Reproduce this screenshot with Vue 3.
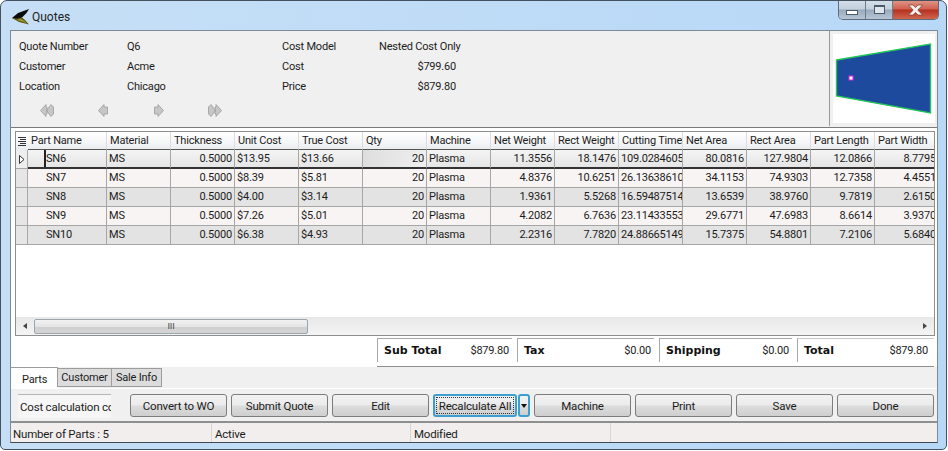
<script setup>
const columns = [
  { label: 'Part Name', width: 79, key: 'name' },
  { label: 'Material', width: 64, key: 'mat' },
  { label: 'Thickness', width: 64, key: 'thick', right: true },
  { label: 'Unit Cost', width: 64, key: 'unit' },
  { label: 'True Cost', width: 64, key: 'truec' },
  { label: 'Qty', width: 64, key: 'qty', right: true, shade: true },
  { label: 'Machine', width: 64, key: 'mach' },
  { label: 'Net Weight', width: 64, key: 'net', right: true },
  { label: 'Rect Weight', width: 64, key: 'rect', right: true },
  { label: 'Cutting Time', width: 64, key: 'cut' },
  { label: 'Net Area', width: 64, key: 'area', right: true },
  { label: 'Rect Area', width: 64, key: 'rarea', right: true },
  { label: 'Part Length', width: 64, key: 'len', right: true },
  { label: 'Part Width', width: 64, key: 'wid', right: true }
]
const rows = [
  { name: 'SN6', mat: 'MS', thick: '0.5000', unit: '$13.95', truec: '$13.66', qty: '20', mach: 'Plasma', net: '11.3556', rect: '18.1476', cut: '109.02846051', area: '80.0816', rarea: '127.9804', len: '12.0866', wid: '8.7795' },
  { name: 'SN7', mat: 'MS', thick: '0.5000', unit: '$8.39', truec: '$5.81', qty: '20', mach: 'Plasma', net: '4.8376', rect: '10.6251', cut: '26.13638610', area: '34.1153', rarea: '74.9303', len: '12.7358', wid: '4.4551' },
  { name: 'SN8', mat: 'MS', thick: '0.5000', unit: '$4.00', truec: '$3.14', qty: '20', mach: 'Plasma', net: '1.9361', rect: '5.5268', cut: '16.59487514', area: '13.6539', rarea: '38.9760', len: '9.7819', wid: '2.6150' },
  { name: 'SN9', mat: 'MS', thick: '0.5000', unit: '$7.26', truec: '$5.01', qty: '20', mach: 'Plasma', net: '4.2082', rect: '6.7636', cut: '23.11433553', area: '29.6771', rarea: '47.6983', len: '8.6614', wid: '3.9370' },
  { name: 'SN10', mat: 'MS', thick: '0.5000', unit: '$6.38', truec: '$4.93', qty: '20', mach: 'Plasma', net: '2.2316', rect: '7.7820', cut: '24.88665149', area: '15.7375', rarea: '54.8801', len: '7.2106', wid: '5.6840' }
]
const totals = [
  { label: 'Sub Total', value: '$879.80', width: 140 },
  { label: 'Tax', value: '$0.00', width: 142 },
  { label: 'Shipping', value: '$0.00', width: 138 },
  { label: 'Total', value: '$879.80', width: 137 }
]
const actionsA = ['Convert to WO', 'Submit Quote', 'Edit']
const actionsB = ['Machine', 'Print', 'Save', 'Done']
</script>

<template>
  <div class="window">
    <header class="titlebar">
      <svg class="logo" width="17" height="16" viewBox="0 0 17 16">
        <path d="M17 0 L6 4 L0 9 L5 11 L10 8.5 L14.5 4 Z" fill="#0c0c0c" />
        <path d="M0 9 L7 13 L17 15.5 L13 11 L10 8.5 L5 9.5 Z" fill="#5f5c14" />
        <path d="M5 11 L11 12.5 L15 14.5 L11 11 L8 10 Z" fill="#a3a038" />
      </svg>
      <span class="title">Quotes</span>
      <div class="controls">
        <span class="ctl ctl-min"><i class="min-glyph"></i></span>
        <span class="ctl ctl-max"><i class="max-glyph"></i></span>
        <span class="ctl ctl-close">
          <svg width="17" height="12" viewBox="0 0 17 12"><path d="M1.5 1 H6 L8.5 3.6 L11 1 H15.5 L10.8 6 L15.5 11 H11 L8.5 8.4 L6 11 H1.5 L6.2 6 Z" fill="#f4f0ee" stroke="#7a3a30" stroke-width="0.7"/></svg>
        </span>
      </div>
    </header>

    <main class="client">
      <section class="summary">
        <div class="info">
          <div class="info-grid">
            <span>Quote Number</span><span>Q6</span><span>Cost Model</span><span>Nested Cost Only</span>
            <span>Customer</span><span>Acme</span><span>Cost</span><span class="money">$799.60</span>
            <span>Location</span><span>Chicago</span><span>Price</span><span class="money">$879.80</span>
          </div>
          <div class="nav">
            <svg width="14" height="13" viewBox="0 0 14 13"><path d="M6 .5 V3 H7 V10 H6 V12.5 L.5 6.5 Z M11 .5 L13.5 3 V10 L11 12.5 L6.5 6.5 Z" fill="#c6c6c6" stroke="#9c9c9c" stroke-width="0.8"/></svg>
            <svg width="10" height="13" viewBox="0 0 10 13"><path d="M6 .5 L.5 6.5 L6 12.5 V10 H9.5 V3 H6 Z" fill="#c6c6c6" stroke="#9c9c9c" stroke-width="0.8"/></svg>
            <svg width="10" height="13" viewBox="0 0 10 13"><path d="M4 .5 L9.5 6.5 L4 12.5 V10 H.5 V3 H4 Z" fill="#c6c6c6" stroke="#9c9c9c" stroke-width="0.8"/></svg>
            <svg width="14" height="13" viewBox="0 0 14 13"><path d="M3 .5 L7.5 6.5 L3 12.5 L.5 10 V3 Z M8 .5 L13.5 6.5 L8 12.5 V10 H7 V3 H8 Z" fill="#c6c6c6" stroke="#9c9c9c" stroke-width="0.8"/></svg>
          </div>
        </div>
        <div class="preview">
          <svg width="102" height="89" viewBox="0 0 102 89">
            <path d="M3.5 26 L97.5 10 L97.5 79 L3.5 62 Z" fill="#1e4a9e" stroke="#22c55a" stroke-width="1.4" />
            <rect x="16" y="42" width="4" height="4" fill="#fff" stroke="#e020e0" stroke-width="1" />
          </svg>
        </div>
      </section>

      <section class="parts">
        <div class="grid">
          <div class="grid-view">
            <div class="row head">
              <div class="rowhead corner">
                <svg width="8" height="9" viewBox="0 0 8 9"><path d="M0 .5H8M2 2.5H8M0 4.5H8M2 6.5H8M0 8.5H8" stroke="#333" stroke-width="1"/></svg>
              </div>
              <div v-for="c in columns" :key="c.key" class="cell hcell" :style="{ width: c.width + 'px' }"><span>{{ c.label }}</span></div>
            </div>
            <div v-for="(r, i) in rows" :key="r.name" class="row" :class="[i === 0 ? 'selected' : i % 2 ? 'light' : 'dark']">
              <div class="rowhead">
                <svg v-if="i === 0" width="6" height="9" viewBox="0 0 6 9"><path d="M.5 .5 L5 4.5 L.5 8.5 Z" fill="#fff" stroke="#333"/></svg>
              </div>
              <div
                v-for="c in columns"
                :key="c.key"
                class="cell"
                :class="{ right: c.right, shade: c.shade, first: c.key === 'name', focus: i === 0 && c.key === 'name' }"
                :style="{ width: c.width + 'px' }"
              ><span class="clip">{{ r[c.key] }}</span></div>
            </div>
          </div>
          <div class="scrollbar">
            <span class="arrow arrow-l"></span>
            <span class="thumb"><i>III</i></span>
            <span class="arrow arrow-r"></span>
          </div>
        </div>

        <div class="totals">
          <div v-for="t in totals" :key="t.label" class="total" :style="{ width: t.width + 'px' }">
            <div class="total-box">
              <b>{{ t.label }}</b><span>{{ t.value }}</span>
            </div>
          </div>
        </div>
      </section>

      <nav class="tabs">
        <span class="tab active">Parts</span>
        <span class="tab tab-customer">Customer</span>
        <span class="tab tab-sale">Sale Info</span>
      </nav>

      <section class="actions">
        <div class="note">Cost calculation co</div>
        <div class="buttons">
          <button v-for="a in actionsA" :key="a" class="btn">{{ a }}</button>
          <div class="split">
            <button class="btn btn-main"><span class="dots">Recalculate All</span></button>
            <button class="btn btn-drop"><i></i></button>
          </div>
          <button v-for="a in actionsB" :key="a" class="btn">{{ a }}</button>
        </div>
      </section>

      <footer class="status">
        <span style="width: 200px">Number of Parts : 5</span>
        <span style="width: 199px">Active</span>
        <span style="width: 200px">Modified</span>
        <span class="grip"></span>
      </footer>
    </main>
  </div>
</template>

<style scoped>
* { box-sizing: border-box; }
.window {
  width: 947px;
  height: 450px;
  padding: 0 8px 6px 9px;
  display: flex;
  flex-direction: column;
  border: 1px solid #44515e;
  border-radius: 7px 7px 5px 5px;
  background: linear-gradient(90deg, #c6dff6 0%, #b7d8f7 100%);
  font-family: Roboto, "Liberation Sans", Arial, sans-serif;
  font-size: 11px;
  letter-spacing: -0.2px;
  color: #1c1c1c;
  overflow: hidden;
}
.titlebar {
  height: 29px;
  flex: none;
  display: flex;
  align-items: center;
  position: relative;
  padding: 2px 0 0 2px;
}
.logo { margin-right: 3px; }
.title { font-size: 12px; letter-spacing: 0; color: #222; }
.controls {
  position: absolute;
  right: -1px;
  top: -1px;
  height: 20px;
  display: flex;
  border: 1px solid #5d6b7a;
  border-top: 0;
  border-radius: 0 0 5px 5px;
  overflow: hidden;
}
.ctl {
  display: flex;
  align-items: center;
  justify-content: center;
  background: linear-gradient(180deg, #d5e0ea 0%, #c3d0dd 48%, #98a9ba 52%, #b6c6d6 100%);
  border-right: 1px solid #6d7c8c;
}
.ctl-min { width: 27px; }
.ctl-max { width: 27px; }
.ctl-close {
  width: 45px;
  border: 0;
  background: linear-gradient(180deg, #e09a8c 0%, #d0604e 48%, #b5301f 52%, #cf6650 100%);
}
.min-glyph { width: 12px; height: 5px; margin-top: 5px; background: #fff; border: 1px solid #4c5a68; }
.max-glyph { width: 11px; height: 9px; background: #dfe7ee; border: 1px solid #4c5a68; border-top-width: 2px; }

.client {
  flex: 1;
  min-height: 0;
  display: flex;
  flex-direction: column;
  background: #f0f0f0;
  border: 1px solid #7d8a97;
  border-bottom: 1px solid #3f4a55;
}
.summary { height: 96px; flex: none; display: flex; }
.info { flex: 1; padding: 5px 0 0 8px; }
.info-grid {
  display: grid;
  grid-template-columns: 108px 155px 97px 90px;
  grid-auto-rows: 20px;
  align-items: center;
  white-space: nowrap;
}
.money { text-align: right; padding-right: 13px; }
.nav {
  display: flex;
  align-items: center;
  height: 13px;
  margin: 8px 0 0 21px;
}
.nav svg:nth-child(1) { margin-right: 44px; }
.nav svg:nth-child(2) { margin-right: 46px; }
.nav svg:nth-child(3) { margin-right: 44px; }
.preview {
  width: 108px;
  flex: none;
  border-left: 1px solid #9a9a9a;
  padding: 3px 2px 3px 3px;
  margin-bottom: 1px;
}
.preview svg { display: block; background: #fff; }

.parts {
  height: 240px;
  flex: none;
  background: #fff;
  border-top: 1px solid #7a7a7a;
  padding: 3px 2px 0 4px;
  display: flex;
  flex-direction: column;
}
.grid {
  height: 205px;
  flex: none;
  border: 1px solid #8e8e8e;
  background: #fff;
  display: flex;
  flex-direction: column;
}
.grid-view { flex: 1; min-height: 0; overflow: hidden; }
.row { display: flex; height: 19px; width: 960px; }
.head { height: 18px; background: linear-gradient(180deg, #ffffff 0%, #f5f6f7 55%, #e9ebed 100%); }
.rowhead {
  width: 12px;
  flex: none;
  background: #e6e6e6;
  border-right: 1px solid #a8a8a8;
  border-bottom: 1px solid #a8a8a8;
  display: flex;
  align-items: center;
  justify-content: center;
}
.corner { background: transparent; border-right: 0; border-bottom: 0; }
.cell {
  flex: none;
  height: 100%;
  border-right: 1px solid #a6a6a6;
  border-bottom: 1px solid #a6a6a6;
  padding: 0 2px 1px;
  display: flex;
  align-items: center;
  overflow: hidden;
  white-space: nowrap;
}
.hcell {
  border-right: 1px solid #dcdcdc;
  border-bottom: 1px solid #555;
  padding: 0 0 0 3px;
}
.right { justify-content: flex-end; }
.first { padding-left: 0; }
.first .clip { margin-left: 16px; padding-left: 2px; }
.dark { background: #e3e3e3; }
.light { background: #f8f4f3; }
.selected { background: linear-gradient(180deg, #f4f4f4, #e4e4e4); }
.selected .cell { border-bottom: 2px solid #333; padding-bottom: 0; }
.selected .shade { background: linear-gradient(90deg, #dedede, #efefef); }
.focus { padding-bottom: 0; }
.focus .clip {
  height: 100%;
  flex: 1;
  display: flex;
  align-items: center;
  border-left: 2px solid #222;
  padding-left: 0;
  padding-bottom: 1px;
}
.selected .rowhead { background: #eeeeee; }

.scrollbar {
  height: 18px;
  flex: none;
  background: linear-gradient(180deg, #e8e8e8, #f4f4f4);
  display: flex;
  align-items: center;
  position: relative;
}
.arrow { width: 0; height: 0; border-top: 3.5px solid transparent; border-bottom: 3.5px solid transparent; }
.arrow-l { border-right: 4px solid #444; margin-left: 7px; }
.arrow-r { border-left: 4px solid #444; margin-left: auto; margin-right: 7px; }
.thumb {
  width: 274px;
  height: 15px;
  margin-left: 7px;
  border: 1px solid #9aa5ae;
  border-radius: 2px;
  background: linear-gradient(180deg, #f2f2f2 0%, #e4e4e4 50%, #cfcfcf 51%, #d5d5d5 100%);
  display: flex;
  align-items: center;
  justify-content: center;
}
.thumb i { font: 9px/9px "Liberation Sans", sans-serif; color: #444; }

.totals {
  margin-left: 362px;
  margin-top: 2px;
  height: 30px;
  display: flex;
  border-bottom: 1px solid #8e8e8e;
  margin-right: 1px;
}
.total { flex: none; padding-right: 5px; }
.total:last-child { padding-right: 0; }
.total-box {
  height: 24px;
  border-top: 1px solid #a8a8a8;
  border-left: 1px solid #a8a8a8;
  padding: 0 3px 0 6px;
  display: flex;
  justify-content: space-between;
  align-items: center;
  white-space: nowrap;
}
.total:last-child .total-box { padding-right: 6px; border-top-color: #c8c8c8; }
.total-box b { font-family: "DejaVu Sans", sans-serif; font-size: 11px; letter-spacing: 0; font-weight: 700; color: #111; }

.tabs { height: 21px; flex: none; display: flex; align-items: flex-start; }
.tab {
  height: 19px;
  background: #dcdcdc;
  border: 1px solid #9c9c9c;
  margin-top: 1px;
  margin-left: -1px;
  display: flex;
  align-items: center;
  justify-content: center;
}
.tab-customer { width: 55px; }
.tab-sale { width: 51px; }
.tab.active {
  height: 21px;
  width: 47px;
  margin: 0;
  background: #fff;
  border: 0;
  border-top: 1px solid #9c9c9c;
  padding: 3px 0 0 11px;
  justify-content: flex-start;
}
.actions {
  height: 35px;
  flex: none;
  border-top: 1px solid #fff;
  display: flex;
  padding: 5px 4px 0 7px;
  border-bottom: 2px solid #8f8f8f;
}
.note {
  width: 93px;
  height: 24px;
  flex: none;
  background: #f6f6f6;
  border-top: 1px solid #b5b5b5;
  padding: 1px 0 0 2px;
  display: flex;
  align-items: center;
  white-space: nowrap;
  overflow: hidden;
  font-size: 11.5px;
}
.buttons { display: flex; gap: 4px; margin-left: 19px; height: 23px; }
.btn {
  width: 97px;
  height: 23px;
  padding: 0;
  border: 1px solid #7c7c7c;
  border-radius: 3px;
  background: linear-gradient(180deg, #f2f2f2 0%, #ebebeb 48%, #dcdcdc 52%, #cfcfcf 100%);
  font: 11.5px Roboto, "Liberation Sans", Arial, sans-serif;
  letter-spacing: -0.2px;
  color: #1c1c1c;
}
.split { display: flex; gap: 1px; }
.btn-main {
  width: 84px;
  border: 2px solid #3c9fcf;
  padding: 1px;
}
.dots {
  display: flex;
  align-items: center;
  justify-content: center;
  height: 100%;
  border: 1px dotted #333;
  white-space: nowrap;
}
.btn-drop {
  width: 12px;
  border: 2px solid #3c9fcf;
  display: flex;
  align-items: center;
  justify-content: center;
}
.btn-drop i { width: 0; height: 0; border-left: 3.5px solid transparent; border-right: 3.5px solid transparent; border-top: 4px solid #111; }
.status { flex: 1; display: flex; background: #f1eeed; padding-left: 1px; }
.status span {
  display: flex;
  align-items: center;
  border-right: 1px solid #d8d5d4;
  padding: 2px 0 0 1px;
  font-size: 11.5px;
}
.status span:nth-child(2), .status span:nth-child(3) { padding-left: 3px; }
.status .grip { flex: 1; border: 0; }
</style>

<style>
html, body { margin: 0; background: #fff; }
</style>
